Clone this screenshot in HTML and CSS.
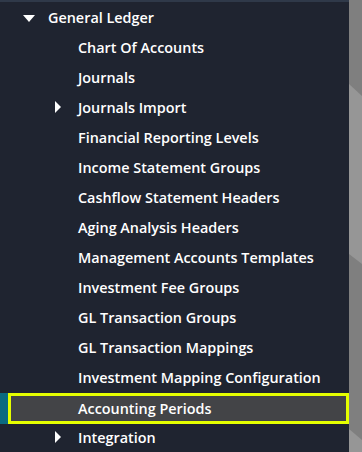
FILE: index.html
```html
<!DOCTYPE html>
<html>
<head>
<meta charset="utf-8">
<link rel="stylesheet" href="styles.css">
</head>
<body>
<div class="page">
  <nav class="menu">
    <div class="topline"></div>
    <ul class="list">
      <li class="item lvl1"><span class="caret down"></span><span class="label">General Ledger</span></li>
      <li class="item lvl2"><span class="label">Chart Of Accounts</span></li>
      <li class="item lvl2"><span class="label">Journals</span></li>
      <li class="item lvl2"><span class="caret right"></span><span class="label">Journals Import</span></li>
      <li class="item lvl2"><span class="label">Financial Reporting Levels</span></li>
      <li class="item lvl2"><span class="label">Income Statement Groups</span></li>
      <li class="item lvl2"><span class="label">Cashflow Statement Headers</span></li>
      <li class="item lvl2"><span class="label">Aging Analysis Headers</span></li>
      <li class="item lvl2"><span class="label">Management Accounts Templates</span></li>
      <li class="item lvl2"><span class="label">Investment Fee Groups</span></li>
      <li class="item lvl2"><span class="label">GL Transaction Groups</span></li>
      <li class="item lvl2"><span class="label">GL Transaction Mappings</span></li>
      <li class="item lvl2"><span class="label">Investment Mapping Configuration</span></li>
      <li class="item lvl2 active"><span class="label">Accounting Periods</span></li>
      <li class="item lvl2"><span class="caret right"></span><span class="label">Integration</span></li>
    </ul>
  </nav>
  <div class="backdrop"></div>
</div>
</body>
</html>
```

FILE: styles.css
```css
html, body {
  margin: 0;
  padding: 0;
  width: 362px;
  height: 452px;
  overflow: hidden;
}
.page {
  display: flex;
  width: 362px;
  height: 452px;
}
.menu {
  width: 349px;
  height: 452px;
  background: #1f2430;
  flex: none;
  font-family: "Open Sans", sans-serif;
  font-weight: 600;
  font-size: 14.4px;
  color: #ffffff;
}
.topline {
  height: 2px;
  background: #2f3949;
}
.list {
  list-style: none;
  margin: 0;
  padding: 0;
}
.item {
  position: relative;
  height: 30px;
  display: flex;
  align-items: center;
  box-sizing: border-box;
  white-space: nowrap;
}
.lvl1 .label {
  margin-left: 48px;
}
.lvl2 .label {
  margin-left: 78px;
}
.caret {
  position: absolute;
  width: 0;
  height: 0;
}
.caret.down {
  left: 23px;
  top: 13px;
  border-left: 6px solid transparent;
  border-right: 6px solid transparent;
  border-top: 7px solid #ffffff;
}
.caret.right {
  left: 55px;
  top: 9px;
  border-top: 6px solid transparent;
  border-bottom: 6px solid transparent;
  border-left: 6px solid #ffffff;
}
.item.active {
  background: #434447;
  margin-left: 8px;
  border: 3px solid #e5ff00;
  height: 31px;
  margin-top: 1px;
  margin-bottom: -2px;
}
.item.active::before {
  content: "";
  position: absolute;
  left: -11px;
  top: -3px;
  width: 8px;
  height: 31px;
  background: #0b6a80;
}
.item.active .label {
  margin-left: 67px;
}
.backdrop {
  flex: 1;
  height: 452px;
  background: #7f7f7f;
  position: relative;
  overflow: hidden;
}
.backdrop::before {
  content: "";
  position: absolute;
  left: 0;
  right: 0;
  top: 84px;
  height: 180px;
  background: #969696;
  clip-path: polygon(0 0, 100% 12px, 100% 100%, 0 calc(100% - 10px));
}
.backdrop::after {
  content: "";
  position: absolute;
  left: 0;
  right: 0;
  top: 429px;
  height: 40px;
  background: #969696;
  clip-path: polygon(0 0, 100% 11px, 100% 100%, 0 100%);
}
```
